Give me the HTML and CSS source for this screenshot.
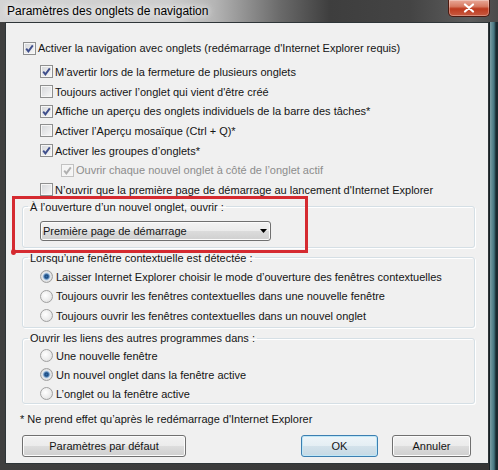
FILE: index.html
```html
<!DOCTYPE html>
<html lang="fr">
<head>
  <meta charset="UTF-8">
  <meta name="viewport" content="width=device-width, initial-scale=1.0">
  <title>Paramètres des onglets de navigation</title>
  <link rel="stylesheet" href="styles.css">
</head>
<body>
  <div class="window">
    <div class="titlebar">
      <span class="title">Paramètres des onglets de navigation</span>
      <span class="close">
        <svg width="12" height="10" viewBox="0 0 12 10"><path d="M2 1.5 L10 8.5 M10 1.5 L2 8.5" stroke="#fff" stroke-width="2.2" stroke-linecap="round"/></svg>
      </span>
    </div>

    <div class="client">
      <div class="row first"><span class="cb on"><svg viewBox="0 0 11 11"><path d="M2.2 5.6 L4.4 8.4 L8.8 2.4" fill="none" stroke="#3f4f8c" stroke-width="1.9"/></svg></span>Activer la navigation avec onglets (redémarrage d'Internet Explorer requis)</div>
      <div class="row sub"><span class="cb on"><svg viewBox="0 0 11 11"><path d="M2.2 5.6 L4.4 8.4 L8.8 2.4" fill="none" stroke="#3f4f8c" stroke-width="1.9"/></svg></span>M’avertir lors de la fermeture de plusieurs onglets</div>
      <div class="row sub"><span class="cb"></span>Toujours activer l’onglet qui vient d'être créé</div>
      <div class="row sub"><span class="cb on"><svg viewBox="0 0 11 11"><path d="M2.2 5.6 L4.4 8.4 L8.8 2.4" fill="none" stroke="#3f4f8c" stroke-width="1.9"/></svg></span>Affiche un aperçu des onglets individuels de la barre des tâches*</div>
      <div class="row sub"><span class="cb"></span>Activer l’Aperçu mosaïque (Ctrl + Q)*</div>
      <div class="row sub"><span class="cb on"><svg viewBox="0 0 11 11"><path d="M2.2 5.6 L4.4 8.4 L8.8 2.4" fill="none" stroke="#3f4f8c" stroke-width="1.9"/></svg></span>Activer les groupes d’onglets*</div>
      <div class="row subsub disabled"><span class="cb on"><svg viewBox="0 0 11 11"><path d="M2.2 5.6 L4.4 8.4 L8.8 2.4" fill="none" stroke="#b0b0b0" stroke-width="1.9"/></svg></span>Ouvrir chaque nouvel onglet à côté de l’onglet actif</div>
      <div class="row sub"><span class="cb"></span>N’ouvrir que la première page de démarrage au lancement d'Internet Explorer</div>

      <fieldset class="group g-newtab">
        <legend>À l’ouverture d’un nouvel onglet, ouvrir :</legend>
        <div class="combo">Première page de démarrage
          <svg class="arrow" width="7" height="4" viewBox="0 0 7 4"><path d="M0 0 H7 L3.5 4 Z" fill="#000"/></svg>
        </div>
      </fieldset>

      <fieldset class="group g-popup">
        <legend>Lorsqu’une fenêtre contextuelle est détectée :</legend>
        <div class="row radio-row"><span class="radio on"></span>Laisser Internet Explorer choisir le mode d’ouverture des fenêtres contextuelles</div>
        <div class="row radio-row"><span class="radio"></span>Toujours ouvrir les fenêtres contextuelles dans une nouvelle fenêtre</div>
        <div class="row radio-row"><span class="radio"></span>Toujours ouvrir les fenêtres contextuelles dans un nouvel onglet</div>
      </fieldset>

      <fieldset class="group g-links">
        <legend>Ouvrir les liens des autres programmes dans :</legend>
        <div class="row radio-row"><span class="radio"></span>Une nouvelle fenêtre</div>
        <div class="row radio-row"><span class="radio on"></span>Un nouvel onglet dans la fenêtre active</div>
        <div class="row radio-row"><span class="radio"></span>L’onglet ou la fenêtre active</div>
      </fieldset>

      <p class="note">* Ne prend effet qu’après le redémarrage d'Internet Explorer</p>

      <div class="buttons">
        <button class="btn btn-reset" type="button">Paramètres par défaut</button>
        <button class="btn btn-ok" type="button">OK</button>
        <button class="btn btn-cancel" type="button">Annuler</button>
      </div>
    </div>

    <div class="highlight"></div>
  </div>
</body>
</html>
```

FILE: styles.css
```css
body { margin: 0; overflow: hidden; font-family: "Liberation Sans", Arial, sans-serif; font-size: 11px; color: #151515; }

.window { position: relative; width: 498px; height: 470px; display: flex; flex-direction: column; background: linear-gradient(to right, #3f3f3f 0, #363636 489px, #182226 489px, #182226 490px, #7c9ea4 490px, #467580 494px, #1a2a30 496px); }

.titlebar { height: 22px; display: flex; align-items: flex-start; flex: none; background: linear-gradient(to right, #d4d4d4 0, #cdcdcd 170px, #b4b4b4 215px, #6a6a6a 280px, #3e3e3e 330px, #444 410px, #5d5d5d 470px, #4a4a4a 498px); }
.title { margin: 4px 0 0 7px; font-size: 12px; line-height: 14px; color: #000; text-shadow: 0 0 6px #fff, 0 0 10px #fff; }
.close { margin-left: auto; margin-right: 8px; width: 42px; height: 17px; box-sizing: border-box; border: 1px solid #4d1a10; border-top: none; border-radius: 0 0 5px 5px; background: linear-gradient(#e9a898 0, #d77a62 40%, #bd3a1f 55%, #c85a40 100%); display: flex; align-items: center; justify-content: center; box-shadow: inset 0 0 0 1px rgba(255,255,255,0.3); }

.client { flex: 1; margin: 0 9px 6px 5px; border: 1px solid #2e3538; background: #f0f0f0; padding-top: 15px; }

.row { display: flex; align-items: center; height: 19.7px; white-space: nowrap; }
.row.first { height: 20px; padding-left: 17px; margin-bottom: 4px; }
.row.sub { padding-left: 34px; }
.row.subsub { padding-left: 55px; }
.row.disabled { color: #8c8c8c; }
.row.disabled .cb { border-color: #c2c2c2; background: #f4f4f4; }

.cb { width: 13px; height: 13px; box-sizing: border-box; flex: none; margin-right: 2px; border: 1px solid #8e8f8f; background: linear-gradient(135deg, #d4d6d9, #f8f8f8); box-shadow: inset 0 0 0 1px #f6f6f6; }
.cb svg { display: block; width: 11px; height: 11px; }

.group { margin: 0 13px 0 16px; padding: 0; min-width: 0; border: 1px solid #d5dfe5; border-radius: 3px; box-shadow: inset 1px 1px #fff, 1px 1px #fff; }
.group legend { margin-left: 5px; padding: 0 2px; line-height: 14px; }
.g-newtab .combo { margin: 7px 0 6px 17px; }
.g-popup { margin-top: 3px; padding-bottom: 2px; }
.g-popup .radio-row:first-of-type { margin-top: 2px; }
.g-popup .radio-row { height: 19.5px; }
.g-links { margin-top: 3px; }
.g-links .radio-row { height: 19px; }
.g-links .radio-row:first-of-type { margin-top: 1px; }
.radio-row { padding-left: 17px; }

.radio { width: 13px; height: 13px; box-sizing: border-box; flex: none; margin-right: 3px; border: 1px solid #a0a0a0; border-radius: 50%; background: radial-gradient(circle at 40% 40%, #fff 0, #ececec 55%, #d6d6d6 100%); }
.radio.on { background: radial-gradient(circle at 50% 50%, #2f6aa8 0, #1b4a80 1.6px, #5d8bbb 2.6px, #c3d5e8 3.6px, #eaeaea 4.4px, #d8d8d8 5.5px); }

.combo { position: relative; width: 231px; height: 20px; box-sizing: border-box; padding-left: 2px; display: flex; align-items: center; border: 1px solid #707070; border-radius: 3px; background: linear-gradient(#f3f3f3 0, #ebebeb 50%, #dcdcdc 50%, #cfcfcf 100%); box-shadow: inset 0 0 0 1px #fbfbfb; }
.combo .arrow { margin-left: auto; margin-right: 3px; }

.note { margin: 8px 0 0 14px; line-height: 14px; }

.buttons { display: flex; margin-top: 9px; padding: 0 17px 0 16px; }
.btn { height: 22px; padding: 0; font: inherit; color: #151515; border: 1px solid #707070; border-radius: 3px; background: linear-gradient(#f2f2f2 0, #ebebeb 50%, #dddddd 50%, #cfcfcf 100%); box-shadow: inset 0 0 0 1px #fcfcfc; }
.btn-reset { width: 164px; }
.btn-ok { width: 77px; margin-left: auto; border-color: #3c7fb1; background: linear-gradient(#eef5f9 0, #e4eef4 50%, #d3e2eb 50%, #c6d9e4 100%); box-shadow: inset 0 0 0 1px #bfe7f7; }
.btn-cancel { width: 79px; margin-left: 14px; }

/* red box drawn over the screenshot */
.highlight { position: absolute; left: 12px; top: 196px; width: 296px; height: 57px; box-sizing: border-box; border: 3px solid #d52a30; }
.highlight::after { content: ""; position: absolute; left: -4px; bottom: -5px; width: 5px; height: 6px; border-radius: 50%; background: #d52a30; }
```
